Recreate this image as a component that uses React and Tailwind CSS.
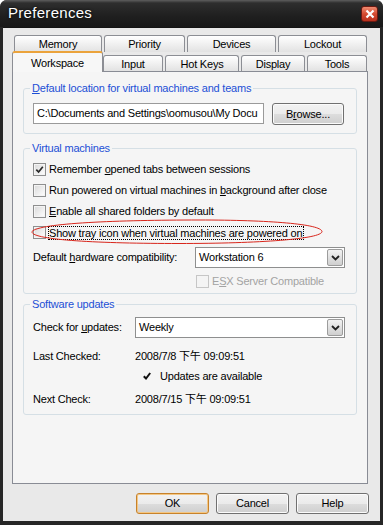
import React from 'react';

const Check = ({ size = 9 }) => (
  <svg width={size} height={size} viewBox="0 0 9 9">
    <path d="M1.3 4.6 L3.6 7 L7.8 1.8" stroke="#2b2b2b" strokeWidth="1.7" fill="none" />
  </svg>
);

const Checkbox = ({ checked, disabled }) => (
  <span
    className={
      disabled
        ? 'w-[13px] h-[13px] shrink-0 border border-[#c6c6c6] bg-[#f4f4f4]'
        : 'w-[13px] h-[13px] shrink-0 border border-[#8e8f8f] bg-gradient-to-br from-[#d9d9d9] to-white flex items-center justify-center shadow-[inset_0_0_0_1px_#f4f4f4]'
    }
  >
    {checked && <Check />}
  </span>
);

const Select = ({ value, className }) => (
  <div className={`h-[21px] flex items-stretch border border-[#8e8f8f] bg-white ${className}`}>
    <span className="flex-1 pl-[3px] flex items-center">{value}</span>
    <span className="w-[16px] m-[1px] border border-[#9c9c9c] rounded-[2px] bg-gradient-to-b from-[#f3f3f3] to-[#cfcfcf] flex items-center justify-center">
      <svg width="9" height="6" viewBox="0 0 9 6">
        <path d="M1 1 L4.5 4.5 L8 1" stroke="#222" strokeWidth="1.8" fill="none" />
      </svg>
    </span>
  </div>
);

const Button = ({ children, primary, className = '' }) => (
  <button
    className={`flex items-center justify-center rounded-[3px] border bg-[linear-gradient(#f2f2f2,#ebebeb_50%,#dddddd_50%,#cfcfcf)] text-black ${
      primary ? 'border-[#c7822b] shadow-[inset_0_0_0_1px_#f4c784]' : 'border-[#707070] shadow-[inset_0_0_0_1px_#fbfbfb]'
    } ${className}`}
  >
    {children}
  </button>
);

const Group = ({ title, className = '', children }) => (
  <div className={`relative border border-[#d5dfe5] rounded-[3px] ${className}`}>
    <span className="absolute left-[6px] top-[-8px] px-[2px] bg-[#f5f5f5] text-[#1c4fd6] leading-[14px] whitespace-nowrap">
      {title}
    </span>
    {children}
  </div>
);

const Tab = ({ label, className = '' }) => (
  <div
    className={`flex items-center justify-center pt-[1px] rounded-t-[3px] border border-b-0 border-[#8c8e94] bg-gradient-to-b from-white to-[#e2e2e2] ${className}`}
  >
    {label}
  </div>
);

export default function App() {
  return (
    <div className="w-[383px] h-[525px] bg-white font-['Liberation_Sans','Noto_Sans_CJK_TC',sans-serif] text-[11px] tracking-[-0.2px] text-black">
      <div className="w-full h-full flex flex-col rounded-t-[7px] overflow-hidden bg-[#262626]">
        {/* title bar */}
        <div className="h-[27px] shrink-0 flex items-start bg-[linear-gradient(#5e5e5e,#2e2e2e_3px,#1f1f1f_60%,#181818)]">
          <span className="ml-[8px] mt-[3px] text-[15px] leading-[20px] tracking-[0.3px] text-white [text-shadow:0_0_3px_#000]">
            Preferences
          </span>
          <div className="ml-auto mt-[6px] mr-[5px] w-[17px] h-[16px] rounded-[3px] border border-[#6b1a12] bg-gradient-to-b from-[#ef8a70] via-[#d44a30] to-[#b8301d] flex items-center justify-center">
            <svg width="10" height="10" viewBox="0 0 10 10">
              <path d="M1.5 1.5 L8.5 8.5 M8.5 1.5 L1.5 8.5" stroke="white" strokeWidth="2.2" />
            </svg>
          </div>
        </div>

        {/* client */}
        <div className="flex-1 mx-[3px] mb-[4px] bg-[#e9e9e9] flex flex-col border-t border-[#141414]">
          {/* tabs, back row */}
          <div className="flex pl-[11px] gap-[2px] mt-[7px] h-[17px]">
            <Tab label="Memory" className="w-[88px]" />
            <Tab label="Priority" className="w-[81px]" />
            <Tab label="Devices" className="w-[89px]" />
            <Tab label="Lockout" className="w-[89px]" />
          </div>
          {/* tabs, front row */}
          <div className="flex items-end pl-[9px] h-[19px]">
            <div className="relative z-10 w-[91px] h-[21px] mb-[-1px] flex justify-center pt-[2px] rounded-t-[3px] border border-b-0 border-[#8c8e94] border-t-2 border-t-[#eba33c] bg-[#f7f7f7]">
              Workspace
            </div>
            <Tab label="Input" className="w-[60px] h-[16px]" />
            <Tab label="Hot Keys" className="w-[74px] h-[16px] ml-[2px]" />
            <Tab label="Display" className="w-[64px] h-[16px] ml-[2px]" />
            <Tab label="Tools" className="w-[60px] h-[16px] ml-[2px]" />
          </div>

          {/* panel */}
          <div className="ml-[9px] w-[356px] h-[413px] border border-[#898c95] bg-[#f5f5f5] flex flex-col">
            <Group
              title={
                <>
                  <u>D</u>efault location for virtual machines and teams
                </>
              }
              className="ml-[10px] mt-[16px] w-[334px] pt-[14px] pb-[8px] pl-[9px] flex items-start"
            >
              <div className="w-[231px] h-[21px] border border-[#9a9a9a] bg-white pl-[3px] flex items-center whitespace-nowrap">
                C:\Documents and Settings\oomusou\My Docu
              </div>
              <Button className="ml-[8px] w-[72px] h-[22px]">
                B<u>r</u>owse...
              </Button>
            </Group>

            <Group title="Virtual machines" className="ml-[10px] mt-[14px] w-[334px] h-[146px] pt-[10px] pl-[9px]">
              <div className="h-[21px] flex items-center gap-[3px]">
                <Checkbox checked />
                <span>
                  Remember <u>o</u>pened tabs between sessions
                </span>
              </div>
              <div className="h-[21px] flex items-center gap-[3px]">
                <Checkbox />
                <span>
                  Run powered on virtual machines in <u>b</u>ackground after close
                </span>
              </div>
              <div className="h-[21px] flex items-center gap-[3px]">
                <Checkbox />
                <span>
                  <u>E</u>nable all shared folders by default
                </span>
              </div>
              <div className="h-[21px] flex items-center gap-[2px]">
                <Checkbox />
                <span className="border border-dotted border-black leading-[12px] pr-[1px]">
                  Show tray icon when virtual machines are powered on
                </span>
              </div>
              <div className="mt-[4px] h-[21px] flex items-center">
                <span className="w-[162px]">
                  Default <u>h</u>ardware compatibility:
                </span>
                <Select value="Workstation 6" className="w-[150px]" />
              </div>
              <div className="mt-[7px] h-[13px] flex items-center gap-[3px] pl-[163px] text-[#a3a3a3]">
                <Checkbox disabled />
                <span>
                  E<u>S</u>X Server Compatible
                </span>
              </div>
              <svg className="absolute left-[5px] top-[70px] overflow-visible" width="294" height="26" viewBox="0 0 294 26">
                <path
                  d="M3 12.5 C 10 4, 90 1, 170 1 C 240 1, 292 5, 293 12.5 C 293 20, 230 24.5, 150 24.5 C 70 24.5, 1 21, 3 12.5 Z"
                  stroke="#d8261c"
                  strokeWidth="1"
                  fill="none"
                />
              </svg>
            </Group>

            <Group title="Software updates" className="ml-[10px] mt-[10px] w-[334px] h-[111px] pt-[12px] pl-[9px]">
              <div className="h-[21px] flex items-center">
                <span className="w-[102px]">
                  Check for <u>u</u>pdates:
                </span>
                <Select value="Weekly" className="w-[210px]" />
              </div>
              <div className="mt-[10px] h-[16px] flex items-center">
                <span className="w-[102px]">Last Checked:</span>
                <span>2008/7/8 下午 09:09:51</span>
              </div>
              <div className="mt-[4px] h-[16px] flex items-center pl-[110px]">
                <svg width="8" height="8" viewBox="0 0 8 8">
                  <path d="M0.8 4.2 L3 6.5 L7.2 1" stroke="#111" strokeWidth="2" fill="none" />
                </svg>
                <span className="ml-[9px]">Updates are available</span>
              </div>
              <div className="mt-[7px] h-[16px] flex items-center">
                <span className="w-[102px]">Next Check:</span>
                <span>2008/7/15 下午 09:09:51</span>
              </div>
            </Group>
          </div>

          {/* dialog buttons */}
          <div className="mt-[9px] flex justify-end gap-[7px] pr-[11px]">
            <Button primary className="w-[73px] h-[21px]">
              OK
            </Button>
            <Button className="w-[73px] h-[21px]">Cancel</Button>
            <Button className="w-[73px] h-[21px]">Help</Button>
          </div>
        </div>
      </div>
    </div>
  );
}
